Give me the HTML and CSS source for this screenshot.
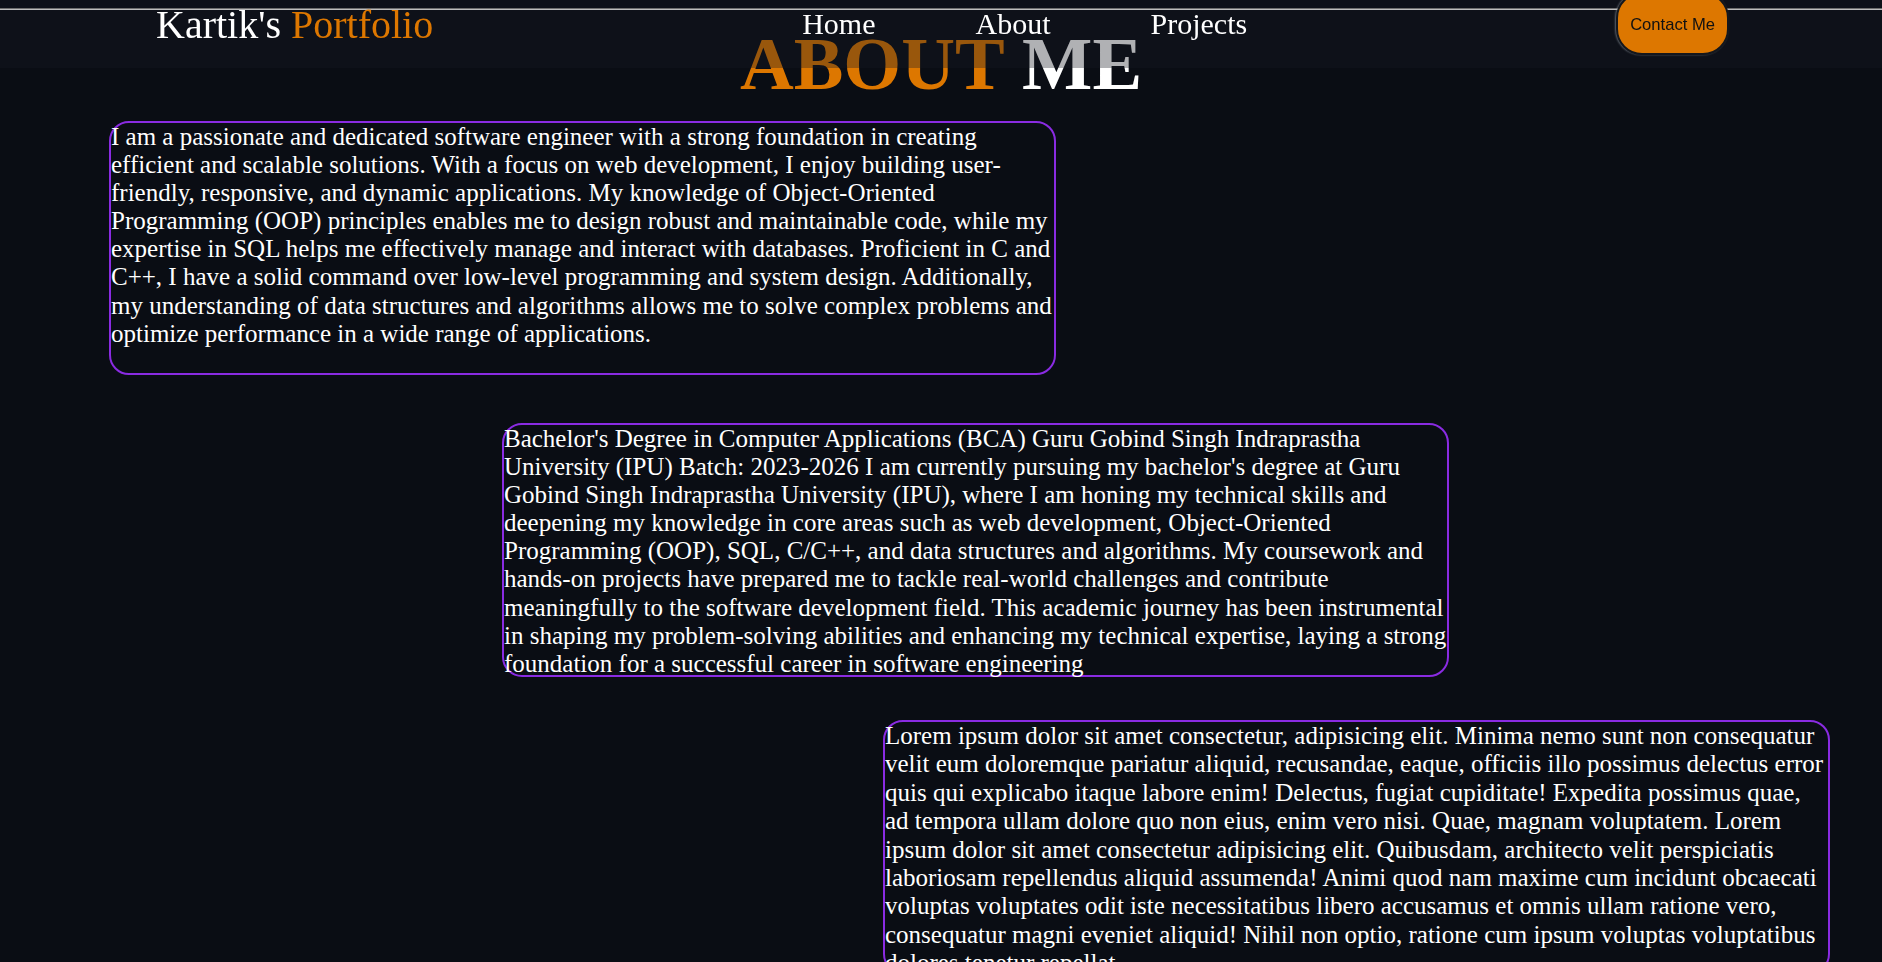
FILE: index.html
```html
<!DOCTYPE html>
<html lang="en">
<head>
<meta charset="utf-8">
<title>Kartik's Portfolio - About</title>
<link rel="stylesheet" href="styles.css">
</head>
<body>
<header class="site-header">
  <div class="top-rule"></div>
  <div class="header-row">
    <div class="logo">Kartik's <span class="logo-accent">Portfolio</span></div>
    <nav class="nav">
      <a class="nav-link" href="#">Home</a>
      <a class="nav-link" href="#">About</a>
      <a class="nav-link" href="#">Projects</a>
    </nav>
    <button class="contact-btn">Contact Me</button>
  </div>
</header>
<main class="about">
  <h1 class="about-title"><span class="accent">ABOUT</span> ME</h1>
  <section class="card card-first">I am a passionate and dedicated software engineer with a strong foundation in creating efficient and scalable solutions. With a focus on web development, I enjoy building user-friendly, responsive, and dynamic applications. My knowledge of Object-Oriented Programming (OOP) principles enables me to design robust and maintainable code, while my expertise in SQL helps me effectively manage and interact with databases. Proficient in C and C++, I have a solid command over low-level programming and system design. Additionally, my understanding of data structures and algorithms allows me to solve complex problems and optimize performance in a wide range of applications.</section>
  <section class="card card-second">Bachelor's Degree in Computer Applications (BCA) Guru Gobind Singh Indraprastha University (IPU) Batch: 2023-2026 I am currently pursuing my bachelor's degree at Guru Gobind Singh Indraprastha University (IPU), where I am honing my technical skills and deepening my knowledge in core areas such as web development, Object-Oriented Programming (OOP), SQL, C/C++, and data structures and algorithms. My coursework and hands-on projects have prepared me to tackle real-world challenges and contribute meaningfully to the software development field. This academic journey has been instrumental in shaping my problem-solving abilities and enhancing my technical expertise, laying a strong foundation for a successful career in software engineering</section>
  <section class="card card-third">Lorem ipsum dolor sit amet consectetur, adipisicing elit. Minima nemo sunt non consequatur velit eum doloremque pariatur aliquid, recusandae, eaque, officiis illo possimus delectus error quis qui explicabo itaque labore enim! Delectus, fugiat cupiditate! Expedita possimus quae, ad tempora ullam dolore quo non eius, enim vero nisi. Quae, magnam voluptatem. Lorem ipsum dolor sit amet consectetur adipisicing elit. Quibusdam, architecto velit perspiciatis laboriosam repellendus aliquid assumenda! Animi quod nam maxime cum incidunt obcaecati voluptas voluptates odit iste necessitatibus libero accusamus et omnis ullam ratione vero, consequatur magni eveniet aliquid! Nihil non optio, ratione cum ipsum voluptas voluptatibus dolores tenetur repellat.</section>
</main>
</body>
</html>
```

FILE: styles.css
```css
html, body {
  margin: 0;
  padding: 0;
  background: #0a0d14;
  color: #ffffff;
  font-family: "Liberation Serif", "Times New Roman", serif;
  overflow: hidden;
}

.site-header {
  position: fixed;
  top: 0;
  left: 0;
  right: 0;
  height: 68px;
  background: rgba(22, 27, 34, 0.34);
  z-index: 10;
}

.top-rule {
  position: absolute;
  top: 8px;
  left: 0;
  right: 0;
  height: 1px;
  border-top: 1px solid #6e6e6e;
  background: #bdbdbd;
}

.header-row {
  position: relative;
  display: flex;
  justify-content: space-between;
  align-items: flex-start;
  padding: 0 153px 0 156px;
}

.logo {
  margin-top: 2px;
  font-size: 40px;
  line-height: 46px;
  color: #ffffff;
  white-space: nowrap;
}

.logo-accent {
  color: #dd7700;
}

.nav {
  display: flex;
  gap: 100px;
  margin-top: 7px;
}

.nav-link {
  color: #ffffff;
  text-decoration: none;
  font-size: 30px;
  line-height: 34px;
}

.contact-btn {
  margin-top: -8px;
  height: 63px;
  padding: 3px 12px 0;
  background: #dd7700;
  color: #111111;
  font-family: "Liberation Sans", Arial, sans-serif;
  font-size: 16.6px;
  border: 2px solid #14171c;
  border-radius: 26px;
  box-shadow: -1px 0 2px rgba(160, 170, 180, 0.55);
  cursor: pointer;
}

.about {
  padding-top: 22px;
}

.about-title {
  margin: 0 0 14px;
  text-align: center;
  font-size: 74.5px;
  line-height: 85px;
  font-weight: bold;
  color: #ffffff;
}

.accent {
  color: #dd7700;
}

.card {
  box-sizing: content-box;
  width: 943px;
  height: 250px;
  border: 2px solid #8a2be2;
  border-radius: 20px;
  font-size: 25px;
  line-height: 28.1px;
  color: #ffffff;
}

.card-first {
  margin-left: 109px;
}

.card-second {
  margin-top: 48px;
  margin-left: 502px;
}

.card-third {
  margin-top: 43px;
  margin-left: 883px;
  line-height: 28.4px;
}
```
